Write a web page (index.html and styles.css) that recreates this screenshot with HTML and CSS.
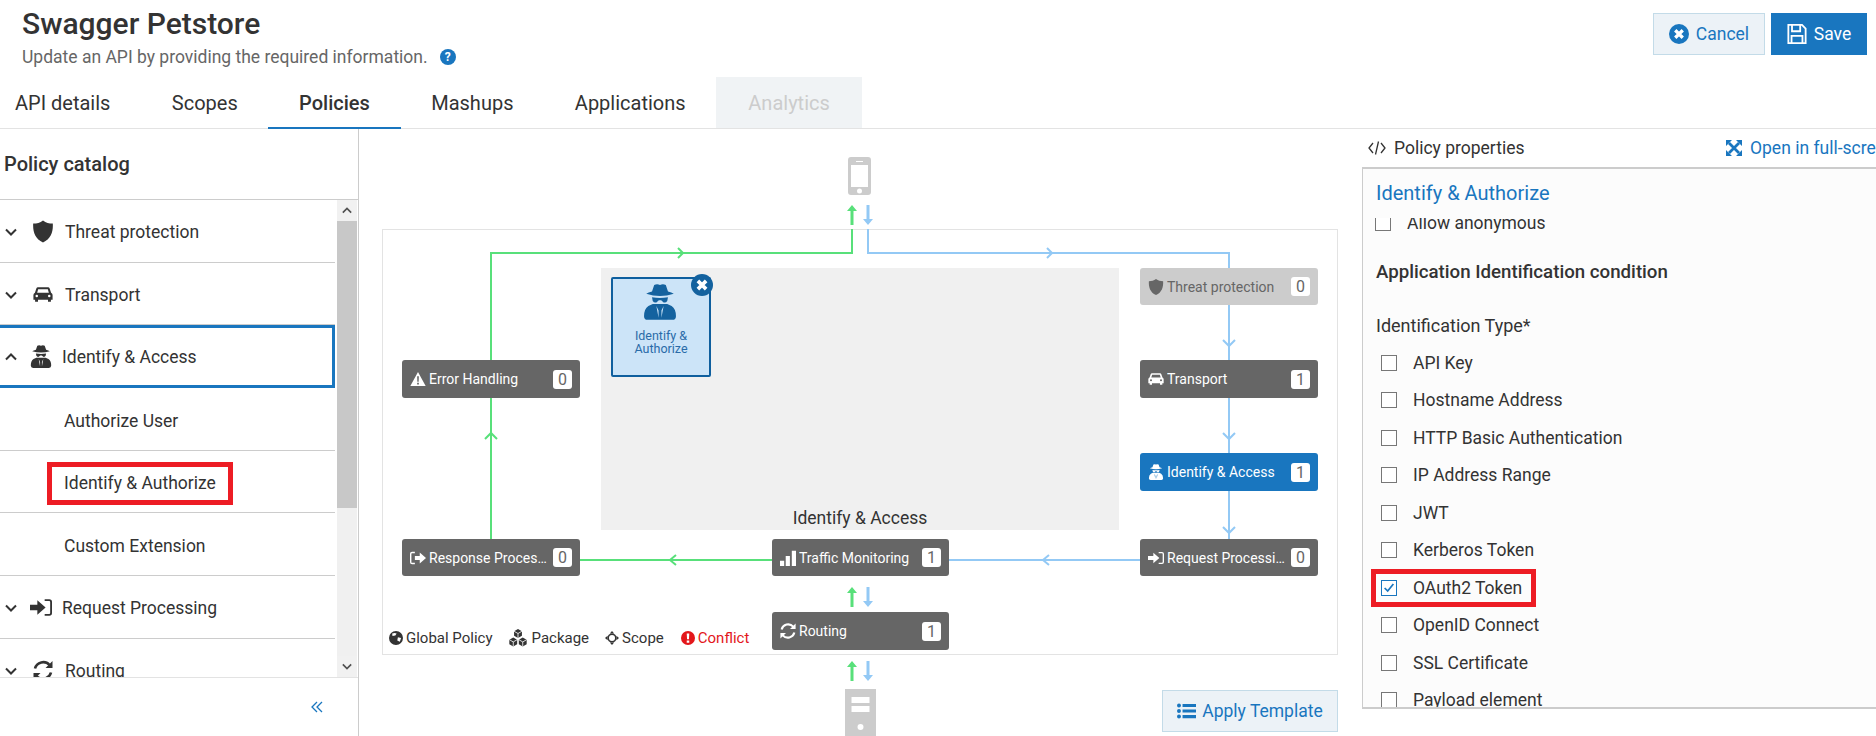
FILE: index.html
```html
<!DOCTYPE html>
<html lang="en">
<head>
<meta charset="utf-8">
<title>Swagger Petstore</title>
<link rel="stylesheet" href="styles.css">
</head>
<body>
<svg class="sprite" xmlns="http://www.w3.org/2000/svg">
  <symbol id="i-shield" viewBox="2 1 20 22"><path d="M12 1C15 3.500 18 4 21.800 4 22.300 12 20 19.500 12 23 4 19.500 1.700 12 2.200 4 6 4 9 3.500 12 1Z"/></symbol>
  <symbol id="i-car" viewBox="0 2.500 24 18.500"><path fill-rule="evenodd" d="M6 3h12q1.500 0 2 1.500l1.700 5q1.800.8 1.800 2.800V18h-2v2.500h-3.500V18H6v2.500H2.500V18h-2v-5.700q0-2 1.800-2.800L4 4.500Q4.500 3 6 3ZM6.200 5.500 5 9.500h14l-1.200-4ZM4.500 12a1.500 1.500 0 1 0 0 3 1.500 1.500 0 0 0 0-3ZM19.500 12a1.500 1.500 0 1 0 0 3 1.500 1.500 0 0 0 0-3Z"/></symbol>
  <symbol id="i-spy" viewBox="1 .8 22 24.800"><path fill-rule="evenodd" d="M8 1.500Q10 .5 12 1.500 14 .5 16 1.500L17.500 6Q20 6.600 21.500 7.500 12 10.500 2.500 7.500 4 6.600 6.500 6ZM6.500 10Q12 11 17.500 10L17 12.500Q16 14 14.500 13.500L12.800 12H11.200L9.500 13.500Q8 14 7 12.500ZM7 14.500 4 16Q1 18 1 23 1 25.500 3.500 25.500H20.500Q23 25.500 23 23 23 18 20 16L17 14.500ZM9.500 16 11 24V19ZM14.500 16 13 24V19Z"/></symbol>
  <symbol id="i-in" viewBox="1 3 24 18"><path d="M1 9h8V4l9 8-9 8v-5H1ZM17 3h5q3 0 3 3v12q0 3-3 3h-5v-2h5q1 0 1-1V6q0-1-1-1h-5Z"/></symbol>
  <symbol id="i-out" viewBox="2 3 23 18"><path d="M9 3H5Q2 3 2 6v12q0 3 3 3h4v-2H5q-1 0-1-1V6q0-1 1-1h4ZM9 9h7V4l9 8-9 8v-5H9Z"/></symbol>
  <symbol id="i-sync" viewBox="2 2 20 20"><path fill="none" stroke="currentColor" stroke-width="2.600" d="M4 10A8.500 8.500 0 0 1 18.500 6.500M20 14A8.500 8.500 0 0 1 5.500 17.500"/><path d="M21.500 2.500V9.500H14.500ZM2.500 21.500V14.500H9.500Z"/></symbol>
  <symbol id="i-warn" viewBox="0 1 24 22"><path fill-rule="evenodd" d="M12 1.500 23.500 22.500H.5ZM10.700 8h2.600l-.3 8h-2ZM10.700 17.500h2.600v2.600h-2.600Z"/></symbol>
  <symbol id="i-bars" viewBox="1 1 21 21"><path d="M1 15h5.500v7H1ZM8.500 9H14v13H8.500ZM16.500 2H22v20h-5.500Z"/></symbol>
  <symbol id="i-globe" viewBox="1 1 22 22"><path fill-rule="evenodd" d="M12 1a11 11 0 1 0 0 22 11 11 0 0 0 0-22ZM6 5Q10 3 13 5L11 8 6.500 9ZM15 11l5 1-2 6-4-2Z"/></symbol>
  <symbol id="i-cubes" viewBox="1 1 22 22"><path d="M12 1l4.800 2.750v5.500L12 12 7.200 9.250v-5.500ZM6.200 11.300l4.800 2.750v5.500L6.200 22.300 1.400 19.550v-5.500ZM17.800 11.300l4.800 2.750v5.500L17.800 22.300 13 19.550v-5.500Z"/><path fill="none" stroke="#fff" d="M7.200 3.750 12 6.500 16.800 3.750M12 6.500V12M1.400 14.050 6.200 16.800 11 14.050M6.200 16.800V22.300M13 14.050 17.800 16.800 22.600 14.050M17.800 16.800V22.300"/></symbol>
  <symbol id="i-scope" viewBox="1 1 22 22"><path d="M12 1l3.500 4h-7ZM12 23l-3.500-4h7ZM1 12l4-3.500v7ZM23 12l-4 3.500v-7Z"/><circle cx="12" cy="12" r="6" fill="none" stroke="currentColor" stroke-width="2.500"/></symbol>
  <symbol id="i-bang" viewBox="1 1 22 22"><circle cx="12" cy="12" r="11"/><path fill="#fff" d="M10 5h4l-.5 9h-3ZM10 16h4v3.500h-4Z"/></symbol>
  <symbol id="i-list" viewBox="0 2 24 20"><circle cx="2.500" cy="5" r="2.500"/><circle cx="2.500" cy="12" r="2.500"/><circle cx="2.500" cy="19" r="2.500"/><path d="M7 3h17v4H7ZM7 10h17v4H7ZM7 17h17v4H7Z"/></symbol>
  <symbol id="i-save" viewBox="2 1 21 22"><path fill="none" stroke="currentColor" stroke-width="2" d="M3 2h15l4 4v16H3ZM7 2v7h9V2M6.500 22v-8h12v8"/></symbol>
  <symbol id="i-x" viewBox="0 0 24 24"><circle cx="12" cy="12" r="12"/><path stroke="#fff" stroke-width="4" d="M7.500 7.500 16.500 16.500M16.500 7.500 7.500 16.500"/></symbol>
  <symbol id="i-expand" viewBox="0 0 16 16"><path d="M0 0h6L0 6ZM16 0v6L10 0ZM0 16v-6l6 6ZM16 16h-6l6-6Z"/><path stroke="currentColor" stroke-width="2.800" d="M3 3 13 13M13 3 3 13"/></symbol>
  <symbol id="i-code" viewBox="0 0 18 14"><path fill="none" stroke="currentColor" stroke-width="1.300" d="M5 2 1 7l4 5M13 2l4 5-4 5M10.500 .5 7.500 13.500"/></symbol>
  <symbol id="i-down" viewBox="0 0 12 8"><path fill="none" stroke="currentColor" stroke-width="2" d="M1 1.500 6 6.500 11 1.500"/></symbol>
  <symbol id="i-up" viewBox="0 0 12 8"><path fill="none" stroke="currentColor" stroke-width="2" d="M1 6.500 6 1.500 11 6.500"/></symbol>
  <symbol id="i-back" viewBox="0 0 12 12"><path fill="none" stroke="currentColor" stroke-width="1.300" d="M6 1 1 6l5 5M11 1 6 6l5 5"/></symbol>
  <symbol id="i-check" viewBox="0 0 16 16"><path fill="none" stroke="currentColor" stroke-width="2" d="M3 8 6.500 11.500 13 3.500"/></symbol>
</svg>

<header class="top">
  <div class="heading">
    <h1 class="title">Swagger Petstore</h1>
    <p class="subtitle">Update an API by providing the required information.<span class="help">?</span></p>
  </div>
  <div class="actions">
    <button class="btn btn-light"><svg class="btn-ico"><use href="#i-x"/></svg>Cancel</button>
    <button class="btn btn-solid"><svg class="btn-ico"><use href="#i-save"/></svg>Save</button>
  </div>
</header>

<nav class="tabs">
  <a class="tab">API details</a>
  <a class="tab">Scopes</a>
  <a class="tab tab-on">Policies</a>
  <a class="tab">Mashups</a>
  <a class="tab">Applications</a>
  <a class="tab tab-off">Analytics</a>
</nav>

<main class="work">
  <aside class="catalog">
    <h2 class="catalog-title">Policy catalog</h2>
    <div class="catalog-body">
      <ul class="cat-list">
        <li class="cat-row"><svg class="chev"><use href="#i-down"/></svg><svg class="cat-ico"><use href="#i-shield"/></svg>Threat protection</li>
        <li class="cat-row"><svg class="chev"><use href="#i-down"/></svg><svg class="cat-ico"><use href="#i-car"/></svg>Transport</li>
        <li class="cat-row cat-row-tight cat-row-open"><svg class="chev"><use href="#i-up"/></svg><svg class="cat-ico"><use href="#i-spy"/></svg>Identify &amp; Access</li>
        <li class="cat-row cat-sub">Authorize User</li>
        <li class="cat-row cat-sub cat-sub-marked"><span class="mark-catalog">Identify &amp; Authorize</span></li>
        <li class="cat-row cat-sub">Custom Extension</li>
        <li class="cat-row cat-row-tight"><svg class="chev"><use href="#i-down"/></svg><svg class="cat-ico"><use href="#i-in"/></svg>Request Processing</li>
        <li class="cat-row"><svg class="chev"><use href="#i-down"/></svg><svg class="cat-ico"><use href="#i-sync"/></svg>Routing</li>
      </ul>
      <div class="scrollbar">
        <span class="scroll-btn"><svg class="scroll-arrow"><use href="#i-up"/></svg></span>
        <span class="scroll-thumb"></span>
        <span class="scroll-track"></span>
        <span class="scroll-btn"><svg class="scroll-arrow"><use href="#i-down"/></svg></span>
      </div>
    </div>
    <div class="catalog-foot"><svg class="collapse"><use href="#i-back"/></svg></div>
  </aside>

  <section class="center">
    <div class="frame">
      <svg class="wires" xmlns="http://www.w3.org/2000/svg">
        <g class="wire-green">
          <path d="M469 -1V23H108V319"/>
          <path d="M197 330H389"/>
          <path d="M295 18l5 5-5 5M102 209l6-6 6 6M293 325l-6 5 6 5"/>
        </g>
        <g class="wire-blue">
          <path d="M485 -1V23H846V310"/>
          <path d="M566 330H757"/>
          <path d="M664 18l5 5-5 5M840 110l6 6 6-6M840 203l6 6 6-6M840 297l6 6 6-6M666 325l-6 5 6 5"/>
        </g>
        <path class="tip-green" d="M467.500 -5V-19H464L469 -25 474 -19H470.500V-5ZM467.500 377V363H464L469 357 474 363H470.500V377ZM467.500 451V437H464L469 431 474 437H470.500V451Z"/>
        <path class="tip-blue" d="M483.500 -25V-11H480L485 -5 490 -11H486.500V-25ZM483.500 357V371H480L485 377 490 371H486.500V357ZM483.500 431V445H480L485 451 490 445H486.500V431Z"/>
      </svg>

      <svg class="device device-phone" viewBox="0 0 23 38"><path fill-rule="evenodd" d="M3 0h17q3 0 3 3v32q0 3-3 3H3q-3 0-3-3V3q0-3 3-3ZM3 8v22h17V8ZM8 4v1h7V4ZM11.500 31.500a2.500 2.500 0 1 0 0 5 2.500 2.500 0 0 0 0-5Z"/></svg>
      <svg class="device device-server" viewBox="0 0 31 47"><path fill-rule="evenodd" d="M0 0h31v47H0ZM6.500 8v6h18V8ZM6.500 17v6h18v-6ZM15.500 35a3 3 0 1 0 0 6 3 3 0 0 0 0-6Z"/></svg>

      <div class="zone">
        <div class="card">
          <svg class="card-close"><use href="#i-x"/></svg>
          <svg class="card-ico"><use href="#i-spy"/></svg>
          <span class="card-text">Identify &amp; Authorize</span>
        </div>
        <span class="zone-label">Identify &amp; Access</span>
      </div>

      <div class="node node-error"><svg class="node-ico"><use href="#i-warn"/></svg><span class="node-name">Error Handling</span><b class="count">0</b></div>
      <div class="node node-threat node-muted"><svg class="node-ico"><use href="#i-shield"/></svg><span class="node-name">Threat protection</span><b class="count">0</b></div>
      <div class="node node-transport"><svg class="node-ico"><use href="#i-car"/></svg><span class="node-name">Transport</span><b class="count">1</b></div>
      <div class="node node-identify node-active"><svg class="node-ico"><use href="#i-spy"/></svg><span class="node-name">Identify &amp; Access</span><b class="count">1</b></div>
      <div class="node node-request"><svg class="node-ico"><use href="#i-in"/></svg><span class="node-name">Request Processing</span><b class="count">0</b></div>
      <div class="node node-traffic"><svg class="node-ico"><use href="#i-bars"/></svg><span class="node-name">Traffic Monitoring</span><b class="count">1</b></div>
      <div class="node node-routing"><svg class="node-ico"><use href="#i-sync"/></svg><span class="node-name">Routing</span><b class="count">1</b></div>
      <div class="node node-response"><svg class="node-ico"><use href="#i-out"/></svg><span class="node-name">Response Processing</span><b class="count">0</b></div>

      <div class="legend">
        <span class="legend-item"><svg class="legend-ico"><use href="#i-globe"/></svg>Global Policy</span>
        <span class="legend-item legend-pack"><svg class="legend-ico legend-wide"><use href="#i-cubes"/></svg>Package</span>
        <span class="legend-item legend-scope"><svg class="legend-ico"><use href="#i-scope"/></svg>Scope</span>
        <span class="legend-item legend-conflict"><svg class="legend-ico"><use href="#i-bang"/></svg>Conflict</span>
      </div>
    </div>
    <div class="template-row">
      <button class="btn btn-light btn-template"><svg class="btn-ico btn-ico-list"><use href="#i-list"/></svg>Apply Template</button>
    </div>
  </section>

  <section class="props">
    <div class="props-head">
      <span class="props-title"><svg class="code-ico"><use href="#i-code"/></svg>Policy properties</span>
      <a class="props-link"><svg class="expand-ico"><use href="#i-expand"/></svg>Open in full-screen</a>
    </div>
    <div class="panel">
      <h3 class="panel-title">Identify &amp; Authorize</h3>
      <div class="panel-scroll">
        <label class="check check-first"><span class="box"></span>Allow anonymous</label>
        <h4 class="panel-sub">Application Identification condition</h4>
        <p class="panel-label">Identification Type*</p>
        <label class="check"><span class="box"></span>API Key</label>
        <label class="check"><span class="box"></span>Hostname Address</label>
        <label class="check"><span class="box"></span>HTTP Basic Authentication</label>
        <label class="check"><span class="box"></span>IP Address Range</label>
        <label class="check"><span class="box"></span>JWT</label>
        <label class="check"><span class="box"></span>Kerberos Token</label>
        <label class="check"><span class="mark-check"><span class="box box-on"><svg class="tick"><use href="#i-check"/></svg></span>OAuth2 Token</span></label>
        <label class="check"><span class="box"></span>OpenID Connect</label>
        <label class="check"><span class="box"></span>SSL Certificate</label>
        <label class="check"><span class="box"></span>Payload element</label>
      </div>
    </div>
  </section>
</main>
</body>
</html>
```
FILE: styles.css
```css
* { box-sizing: border-box; }
html, body { margin: 0; height: 736px; overflow: hidden; background: #fff; }
body { font-family: Roboto, "Liberation Sans", sans-serif; color: #333; font-size: 17.500px; }
.sprite { display: none; }
svg { fill: currentColor; display: block; flex: none; }
ul { list-style: none; margin: 0; padding: 0; }

/* header */
.top { height: 77px; display: flex; justify-content: space-between; padding: 0 9px 0 22px; }
.title { margin: 7px 0 0; font-size: 30px; line-height: 34px; font-weight: 500; }
.subtitle { margin: 6px 0 0; font-size: 17.500px; line-height: 20px; color: #666; display: flex; align-items: center; }
.help { width: 16px; height: 16px; border-radius: 50%; background: #1976bf; color: #fff; font-size: 12px; font-weight: 700; line-height: 16px; text-align: center; margin-left: 12px; }
.actions { display: flex; gap: 6px; padding-top: 13px; align-items: flex-start; }
.btn { height: 42px; font: 400 17.500px Roboto, sans-serif; display: flex; align-items: center; justify-content: center; border: 1px solid transparent; padding: 0; }
.btn-ico { width: 20px; height: 20px; margin-right: 7px; }
.btn-ico-list { width: 19px; height: 16px; margin-right: 6px; }
.btn-light { width: 112px; background: #ecf2f7; border-color: #c3dbe8; color: #1976bf; }
.btn-solid { width: 96px; background: #1976bf; color: #fff; }

/* tabs */
.tabs { height: 52px; display: flex; border-bottom: 1px solid #e3e3e3; }
.tab { padding: 11px 30.700px 0; font-size: 20px; line-height: 30px; color: #333; }
.tab:first-child { padding-left: 15px; }
.tab-on { font-weight: 500; border-bottom: 2px solid #1976bf; height: 52px; }
.tab-off { background: #f0f3f5; color: #ccc; padding-left: 32px; padding-right: 32px; }

/* layout */
.work { height: 607px; display: grid; grid-template-columns: 359px 1003px 1fr; }

/* catalog */
.catalog { border-right: 1px solid #ccc; display: flex; flex-direction: column; height: 607px; }
.catalog-title { margin: 0; height: 71px; font-size: 20px; font-weight: 500; line-height: 70px; padding-left: 4px; border-bottom: 1px solid #ccc; }
.catalog-body { height: 477px; display: flex; overflow: hidden; padding-right: 1px; }
.cat-list { width: 336px; flex: none; margin-right: 1px; }
.cat-row { height: 62.700px; display: flex; align-items: center; font-size: 17.500px; padding: 2px 0 0 5px; border-bottom: 1px solid #ccc; width: 335px; }
.chev { width: 12px; height: 8px; margin-right: 16px; color: #333; }
.cat-ico { width: 20px; height: 23px; margin-right: 12px; color: #333; }
.cat-row-tight .chev { margin-right: 13px; }
.cat-row-tight .cat-ico { width: 22px; margin-right: 10px; }
.cat-row-open { border: 3px solid #1976bf; border-left: 0; padding-top: 0; }
.cat-sub { padding-top: 4px; padding-left: 64px; }
.cat-sub-marked { padding-left: 47px; }
.mark-catalog { border: 5px solid #ed1c24; height: 43px; width: 186px; padding-left: 12px; line-height: 32px; }
.scrollbar { width: 20px; flex: none; display: flex; flex-direction: column; background: #f0f0f0; }
.scroll-btn { height: 21px; background: #f1f1f1; display: flex; align-items: center; justify-content: center; flex: none; }
.scroll-arrow { width: 10px; height: 7px; color: #505050; }
.scroll-thumb { height: 287px; background: #c8c8c8; flex: none; }
.scroll-track { flex: 1; }
.catalog-foot { height: 59px; border-top: 1px solid #e3e3e3; display: flex; justify-content: flex-end; align-items: center; padding-right: 35px; }
.collapse { width: 12px; height: 12px; color: #1976bf; }

/* centre canvas */
.center { padding: 100px 24px 0 23px; }
.frame { position: relative; width: 956px; height: 426px; border: 1px solid #e3e3e3; }
.wires { position: absolute; left: 0; top: 0; width: 954px; height: 424px; overflow: visible; }
.wire-green path, .wire-blue path { fill: none; stroke-width: 2; }
.wire-green { stroke: #58e07a; }
.wire-blue { stroke: #93c9f5; }
.tip-green { fill: #58e07a; }
.tip-blue { fill: #93c9f5; }
.device { position: absolute; fill: #ccc; }
.device-phone { left: 465px; top: -73px; width: 23px; height: 38px; }
.device-server { left: 462px; top: 459px; width: 31px; height: 47px; }

.zone { position: absolute; left: 218px; top: 38px; width: 518px; height: 262px; background: #f0f0f0; display: flex; align-items: flex-end; justify-content: center; }
.zone-label { font-size: 17.500px; line-height: 24px; }
.card { position: absolute; left: 10px; top: 9px; width: 100px; height: 100px; background: #cce4f8; border: 2px solid #0f5f9e; border-radius: 2px; color: #14629f; display: flex; flex-direction: column; align-items: center; padding-top: 5px; }
.card-close { position: absolute; right: -4px; top: -5px; width: 22px; height: 22px; }
.card-ico { width: 32px; height: 36px; margin-left: -2px; }
.card-text { font-size: 12.500px; line-height: 13px; width: 60px; text-align: center; margin-top: 9px; color: #2a6ba8; }

.node { position: absolute; width: 178px; height: 37px; background: #666; color: #fff; border-radius: 3px; display: flex; align-items: center; padding: 0 8px 0 8px; font-size: 14px; }
.node-ico { width: 16px; height: 16px; margin-right: 3px; }
.node-name { flex: 1; min-width: 0; white-space: nowrap; overflow: hidden; text-overflow: ellipsis; margin-right: 4px; }
.count { width: 19px; height: 19px; background: #fff; color: #666; border-radius: 3px; font-weight: 400; font-size: 16px; line-height: 19px; text-align: center; flex: none; }
.node-error { left: 19px; top: 130px; height: 38px; }
.node-threat { left: 757px; top: 38px; }
.node-transport { left: 757px; top: 130px; height: 38px; }
.node-identify { left: 757px; top: 223px; height: 38px; }
.node-request { left: 757px; top: 309px; }
.node-traffic { left: 389px; top: 309px; width: 177px; }
.node-routing { left: 389px; top: 382px; width: 177px; height: 38px; }
.node-response { left: 19px; top: 309px; }
.node-muted { background: #ccc; color: #666; }
.node-active { background: #1976bf; }

.legend { position: absolute; left: 6px; top: 398px; display: flex; align-items: center; font-size: 15px; line-height: 20px; }
.legend-item { display: flex; align-items: center; margin-right: 16px; }
.legend-scope { margin-right: 17px; }
.legend-ico { width: 14px; height: 14px; margin-right: 3px; }
.legend-wide { width: 18px; height: 18px; margin-right: 5px; }
.legend-conflict { color: #e3171b; }

.template-row { display: flex; justify-content: flex-end; margin-top: 35px; width: 956px; }
.btn-template { width: 176px; }

/* properties */
.props { min-width: 0; overflow: hidden; }
.props-head { height: 38px; display: grid; grid-template-columns: 364px 1fr; align-items: center; white-space: nowrap; }
.props-title { display: flex; align-items: center; padding-left: 6px; font-size: 17.500px; }
.code-ico { width: 18px; height: 14px; margin-right: 8px; }
.props-link { display: flex; align-items: center; color: #1976bf; font-size: 17.500px; }
.expand-ico { width: 16px; height: 16px; margin-right: 8px; }
.panel { width: 560px; height: 542px; border: 1px solid #ccc; border-width: 2px 1px 2px 1px; background: #fcfcfc; display: flex; flex-direction: column; }
.panel-title { margin: 0; height: 49px; flex: none; padding-left: 13px; font-size: 20px; font-weight: 400; color: #1976bf; line-height: 48px; }
.panel-scroll { flex: 1; min-height: 0; overflow: hidden; padding-left: 18px; }
.panel-sub { margin: 26px 0 0 -5px; font-size: 18.700px; font-weight: 500; line-height: 24px; }
.panel-label { margin: 30px 0 0 -5px; font-size: 18px; line-height: 24px; height: 24px; }
.check { height: 37.500px; display: flex; align-items: center; font-size: 17.500px; }
.check-first { margin: -6px 0 0 -6px; height: 22px; }
.panel-label + .check { margin-top: 6px; }
.box { width: 16px; height: 16px; border: 1px solid #777; background: #fff; margin-right: 16px; flex: none; }
.box-on { border-color: #1976bf; color: #1976bf; }
.tick { width: 14px; height: 14px; }
.mark-check { display: flex; align-items: center; height: 38px; margin-left: -10px; padding: 0 9px 0 5px; border: 5px solid #ed1c24; }
```
